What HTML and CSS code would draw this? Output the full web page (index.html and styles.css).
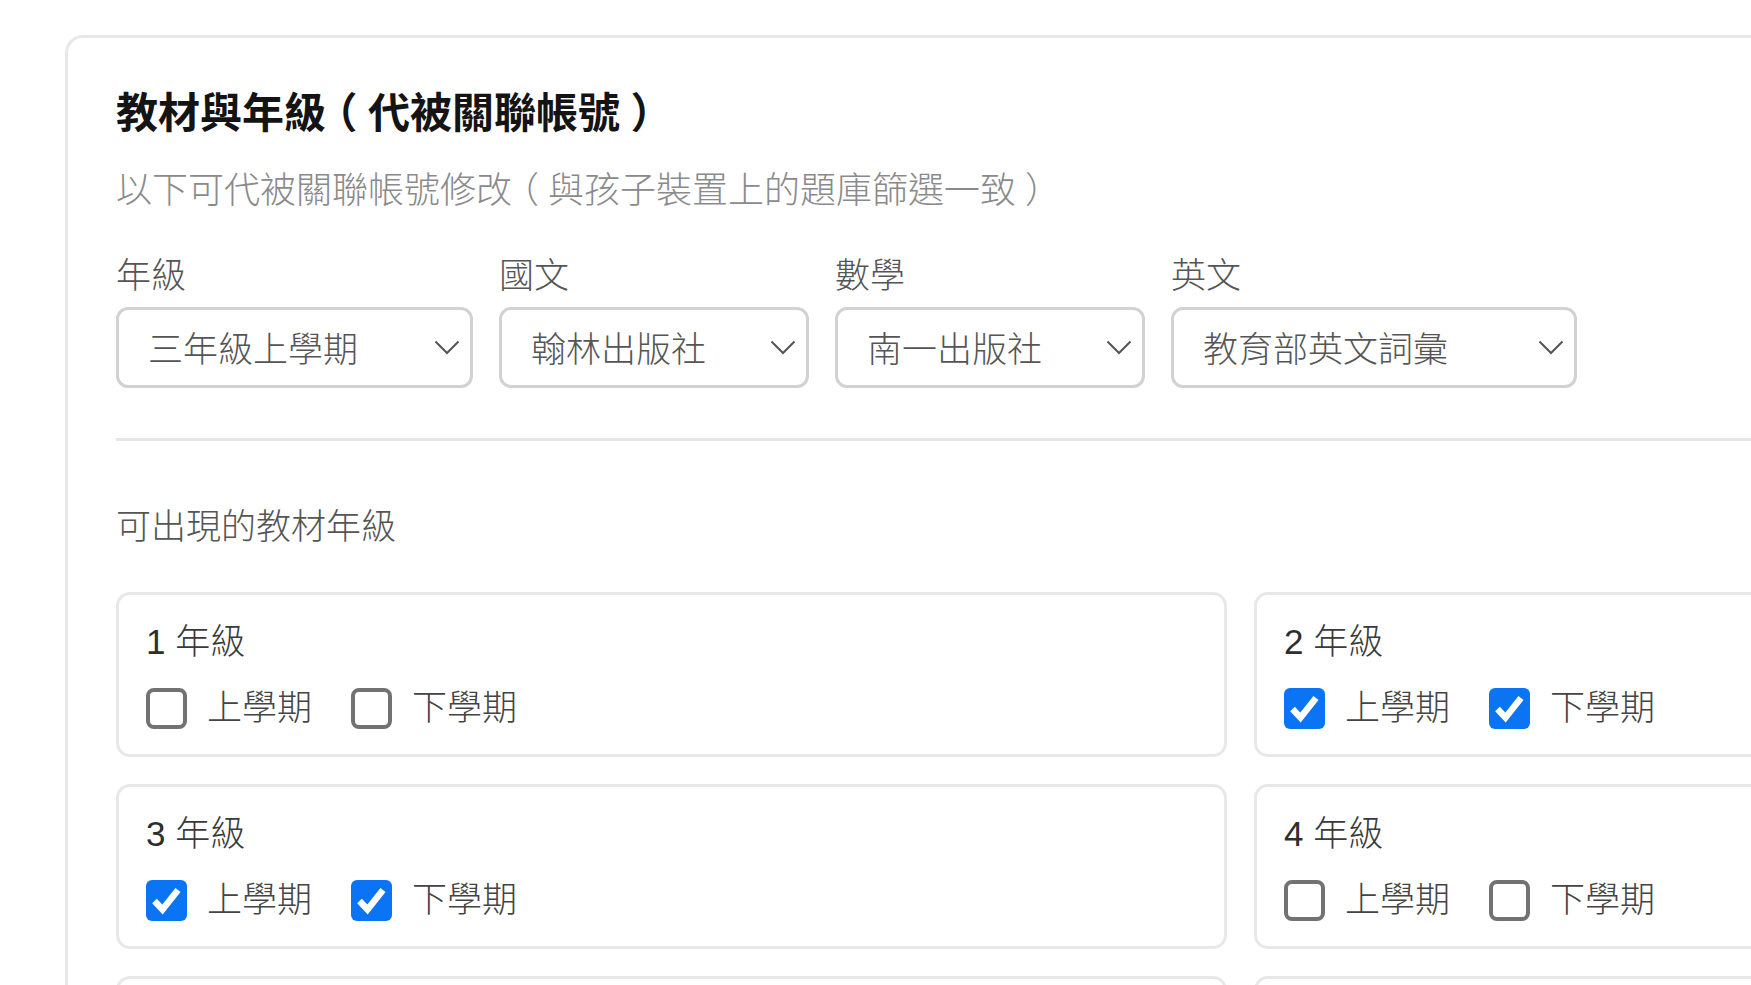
FILE: index.html
```html
<!DOCTYPE html>
<html lang="zh-Hant">
<head>
<meta charset="utf-8">
<title>教材與年級</title>
<link rel="stylesheet" href="styles.css">
</head>
<body>
<div class="page">
  <section class="panel">
    <h1 class="panel-title">教材與年級<span class="paren">（</span>代被關聯帳號<span class="paren">）</span></h1>
    <p class="panel-sub">以下可代被關聯帳號修改<span class="paren">（</span>與孩子裝置上的題庫篩選一致<span class="paren">）</span></p>

    <div class="selects">
      <div class="field">
        <div class="field-label">年級</div>
        <div class="select w-grade"><span>三年級上學期</span><svg class="chev" viewBox="0 0 26 15"><polyline points="1.5,1.5 13,13 24.5,1.5"/></svg></div>
      </div>
      <div class="field">
        <div class="field-label">國文</div>
        <div class="select w-pub"><span>翰林出版社</span><svg class="chev" viewBox="0 0 26 15"><polyline points="1.5,1.5 13,13 24.5,1.5"/></svg></div>
      </div>
      <div class="field">
        <div class="field-label">數學</div>
        <div class="select w-pub"><span>南一出版社</span><svg class="chev" viewBox="0 0 26 15"><polyline points="1.5,1.5 13,13 24.5,1.5"/></svg></div>
      </div>
      <div class="field">
        <div class="field-label">英文</div>
        <div class="select w-eng"><span>教育部英文詞彙</span><svg class="chev" viewBox="0 0 26 15"><polyline points="1.5,1.5 13,13 24.5,1.5"/></svg></div>
      </div>
    </div>

    <hr class="divider">

    <div class="section-label">可出現的教材年級</div>

    <div class="grades">
      <div class="grade">
        <div class="grade-title"><span class="num">1</span> 年級</div>
        <div class="terms">
          <label class="term"><span class="box"></span>上學期</label>
          <label class="term"><span class="box"></span>下學期</label>
        </div>
      </div>
      <div class="grade">
        <div class="grade-title"><span class="num">2</span> 年級</div>
        <div class="terms">
          <label class="term"><span class="box on"><svg viewBox="0 0 41 41"><path d="M8.5 21 L16.5 29.5 L32 10"/></svg></span>上學期</label>
          <label class="term"><span class="box on"><svg viewBox="0 0 41 41"><path d="M8.5 21 L16.5 29.5 L32 10"/></svg></span>下學期</label>
        </div>
      </div>
      <div class="grade">
        <div class="grade-title"><span class="num">3</span> 年級</div>
        <div class="terms">
          <label class="term"><span class="box on"><svg viewBox="0 0 41 41"><path d="M8.5 21 L16.5 29.5 L32 10"/></svg></span>上學期</label>
          <label class="term"><span class="box on"><svg viewBox="0 0 41 41"><path d="M8.5 21 L16.5 29.5 L32 10"/></svg></span>下學期</label>
        </div>
      </div>
      <div class="grade">
        <div class="grade-title"><span class="num">4</span> 年級</div>
        <div class="terms">
          <label class="term"><span class="box"></span>上學期</label>
          <label class="term"><span class="box"></span>下學期</label>
        </div>
      </div>
      <div class="grade grade-edge"></div>
      <div class="grade grade-edge"></div>
    </div>
  </section>
</div>
</body>
</html>
```

FILE: styles.css
```css
html, body {
  margin: 0;
  padding: 0;
  background: #ffffff;
  overflow: hidden;
}

body {
  font-family: "Liberation Sans", "Noto Sans CJK TC", "Noto Sans CJK SC", sans-serif;
  color: #444;
}

.page {
  padding: 35px 0 0 65px;
  width: 2600px;
  height: 950px;
  overflow: hidden;
}

.panel {
  width: 2400px;
  border: 3px solid #e8e8e8;
  border-radius: 18px;
  padding: 48px 48px 40px 48px;
  box-sizing: border-box;
  background: #fff;
}

.paren {
  font-feature-settings: "halt" 1;
  padding: 0 0.25em;
}

.panel-title {
  margin: 0;
  font-size: 42px;
  line-height: 56px;
  font-weight: 700;
  color: #141414;
}

.panel-sub {
  margin: 24px 0 0 0;
  font-size: 36px;
  line-height: 50px;
  font-weight: 300;
  color: #8a8a8a;
}

.selects {
  display: flex;
  gap: 26px;
  margin-top: 35px;
}

.field-label {
  font-size: 35px;
  line-height: 49px;
  font-weight: 300;
  color: #555;
}

.select {
  margin-top: 7px;
  height: 81px;
  box-sizing: border-box;
  border: 3px solid #d2d2d2;
  border-radius: 12px;
  display: flex;
  align-items: center;
  padding: 0 10px 0 29px;
  font-size: 35px;
  font-weight: 300;
  color: #555;
}

.select span {
  flex: 1;
  margin-top: -3px;
}

.w-grade { width: 357px; }
.w-pub { width: 310px; }
.w-eng { width: 406px; }

.chev {
  width: 26px;
  height: 15px;
  fill: none;
  stroke: #555;
  stroke-width: 2;
}

.divider {
  margin: 50px 0 0 0;
  border: 0;
  height: 3px;
  background: #e6e6e6;
}

.section-label {
  margin-top: 61px;
  font-size: 35px;
  line-height: 49px;
  font-weight: 300;
  color: #555;
}

.grades {
  margin-top: 41px;
  display: grid;
  grid-template-columns: 1111px 1111px;
  gap: 27px;
}

.grade {
  height: 165px;
  box-sizing: border-box;
  border: 3px solid #e8e8e8;
  border-radius: 14px;
  padding: 22px 28px 0 27px;
}

.grade-title {
  font-size: 35px;
  line-height: 49px;
  font-weight: 300;
  color: #3a3a3a;
}

.grade-title .num {
  font-weight: 400;
  color: #2e2e2e;
}

.terms {
  display: flex;
  gap: 39px;
  margin-top: 21px;
}

.term {
  display: flex;
  align-items: center;
  gap: 20px;
  font-size: 35px;
  line-height: 42px;
  font-weight: 300;
  color: #444;
}

.box {
  width: 41px;
  height: 41px;
  box-sizing: border-box;
  border: 4px solid #727272;
  border-radius: 8px;
  background: #fff;
  display: block;
}

.box.on {
  border: 0;
  border-radius: 6px;
  background: #0a74f5;
}

.box.on svg {
  display: block;
  width: 41px;
  height: 41px;
  fill: none;
  stroke: #fff;
  stroke-width: 6.5;
  stroke-linejoin: miter;
  stroke-linecap: butt;
}
```
